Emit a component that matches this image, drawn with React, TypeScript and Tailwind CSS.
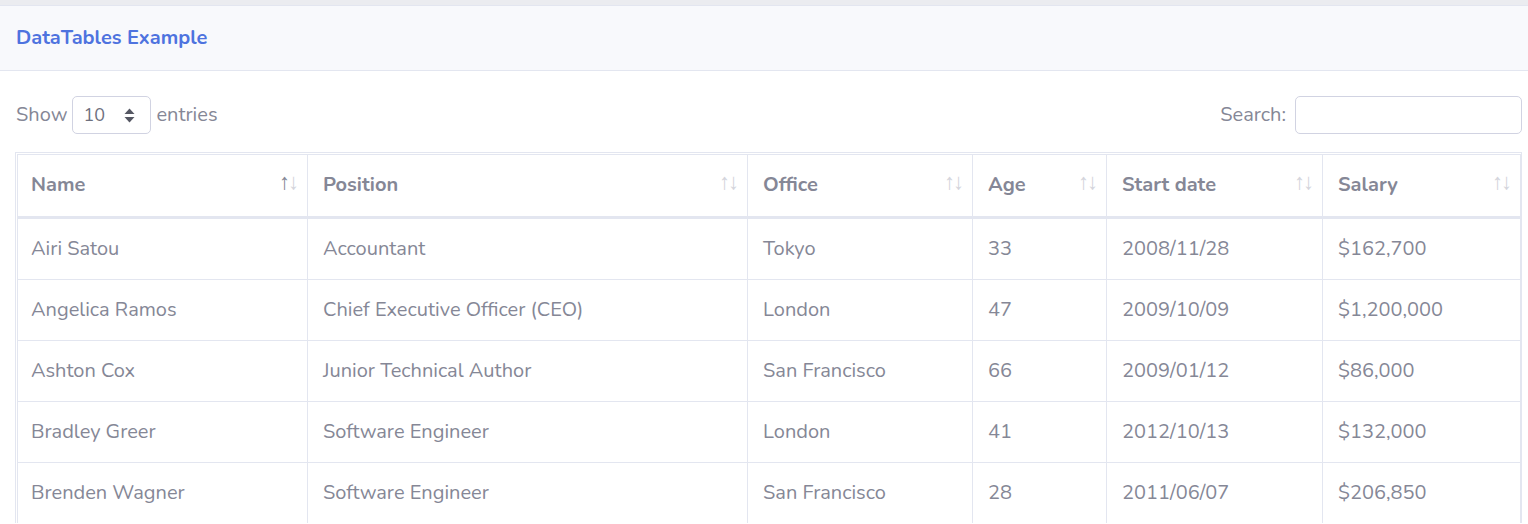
import React from "react";

const rows = [
  ["Airi Satou", "Accountant", "Tokyo", "33", "2008/11/28", "$162,700"],
  ["Angelica Ramos", "Chief Executive Officer (CEO)", "London", "47", "2009/10/09", "$1,200,000"],
  ["Ashton Cox", "Junior Technical Author", "San Francisco", "66", "2009/01/12", "$86,000"],
  ["Bradley Greer", "Software Engineer", "London", "41", "2012/10/13", "$132,000"],
  ["Brenden Wagner", "Software Engineer", "San Francisco", "28", "2011/06/07", "$206,850"],
];

const cols = [
  { label: "Name", w: "w-[290px]", active: true },
  { label: "Position", w: "w-[440px]", active: false },
  { label: "Office", w: "w-[225px]", active: false },
  { label: "Age", w: "w-[134px]", active: false },
  { label: "Start date", w: "w-[216px]", active: false },
  { label: "Salary", w: "w-[198px]", active: false },
];

function SortArrows({ active }: { active: boolean }) {
  return (
    <span className="flex items-center text-[22px] leading-none -mt-[7px] font-light tracking-[-2px]">
      <span className={active ? "text-[#858796]" : "text-[#d4d5dc]"}>↑</span>
      <span className="text-[#d4d5dc]">↓</span>
    </span>
  );
}

export default function App() {
  return (
    <div className="w-[1528px] h-[524px] overflow-hidden bg-white text-[#858796] text-[20px]" style={{ fontFamily: '"Nunito", "Noto Sans", sans-serif' }}>
      <div className="h-[5px] bg-[#ebecf0]" />
      <div className="h-[66px] bg-[#f8f9fc] border-y border-[#e3e6f0] flex items-center pl-4">
        <h6 className="text-[#4e73df] font-bold text-[20px] leading-[30px]">DataTables Example</h6>
      </div>
      <div className="pl-[15px] pr-[6px] pt-[25px]">
        <div className="flex items-center justify-between h-[38px]">
          <div className="flex items-center gap-[5px] pl-[1px]">
            <span>Show</span>
            <div className="w-[79px] h-[38px] border border-[#d1d3e2] rounded-[5px] flex items-center justify-between pl-[10px] pr-[15px] text-[#6e707e] text-[18px]">
              <span>10</span>
              <svg width="11" height="15" viewBox="0 0 11 15">
                <path d="M5.5 0.5 L10.5 6 L0.5 6 Z" fill="#555763" />
                <path d="M5.5 14.5 L10.5 9 L0.5 9 Z" fill="#555763" />
              </svg>
            </div>
            <span>entries</span>
          </div>
          <div className="flex items-center gap-[9px]">
            <span>Search:</span>
            <input className="w-[227px] h-[38px] border border-[#d1d3e2] rounded-[5px] outline-none" />
          </div>
        </div>
        <div className="mt-[18px] border border-b-0 border-[#e3e6f0] p-[1px] pb-0 w-[1507px]">
          <table className="border-collapse w-full table-fixed">
            <thead>
              <tr>
                {cols.map((c, i) => (
                  <th
                    key={c.label}
                    className={`${c.w} ${i === 0 ? "pl-[13px]" : "pl-[15px]"} border border-[#e3e6f0] border-b-[3px] text-left font-bold pr-[10px] pt-[15px] pb-[16px] leading-[30px]`}
                  >
                    <div className="flex items-center justify-between">
                      <span>{c.label}</span>
                      <SortArrows active={c.active} />
                    </div>
                  </th>
                ))}
              </tr>
            </thead>
            <tbody>
              {rows.map((r, ri) => (
                <tr key={r[0]}>
                  {r.map((v, i) => (
                    <td
                      key={i}
                      className={`${i === 0 ? "pl-[13px]" : "pl-[15px]"} ${ri === rows.length - 1 ? "border-b-0" : ""} border border-[#e3e6f0] pr-2 py-[15px] leading-[30px] whitespace-nowrap`}
                    >
                      {v}
                    </td>
                  ))}
                </tr>
              ))}
            </tbody>
          </table>
        </div>
      </div>
    </div>
  );
}
